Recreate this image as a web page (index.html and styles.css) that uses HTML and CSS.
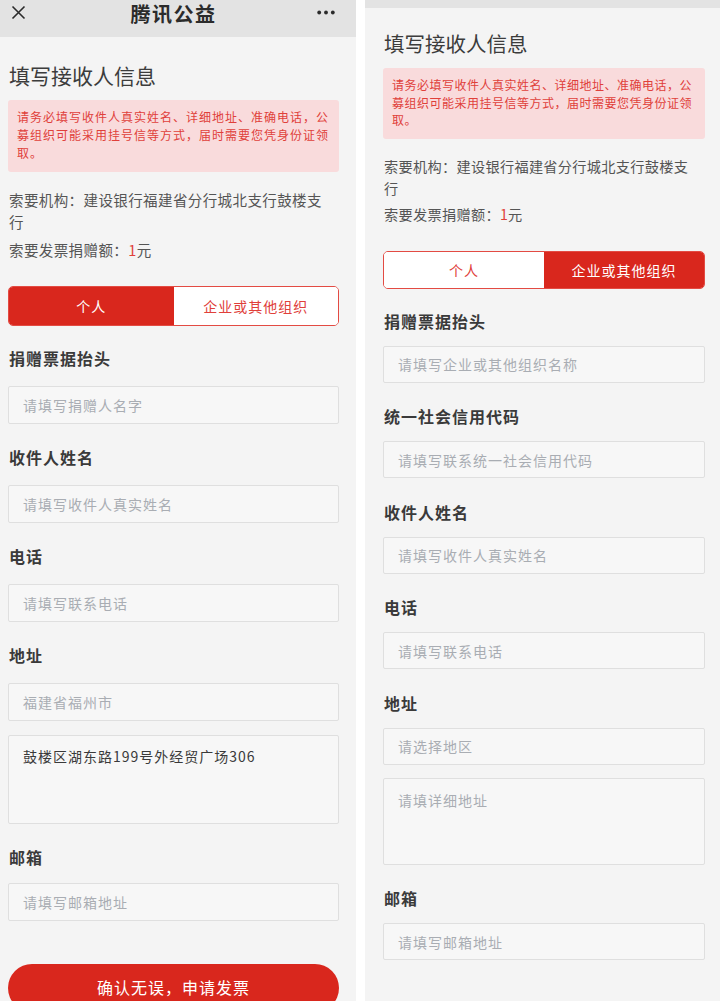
FILE: index.html
```html
<!DOCTYPE html>
<html lang="zh-CN">
<head>
  <meta charset="UTF-8" />
  <meta name="viewport" content="width=device-width, initial-scale=1.0"/>
  <title>填写接收人信息</title>
  <link rel="stylesheet" href="styles.css">
</head>
<body>

  <!-- 个人 -->
  <div class="phone phone-a">
    <div class="navbar">
      <svg class="nav-close" width="15" height="15" viewBox="0 0 15 15">
        <path d="M1.5 1.5 L13.5 13.5 M13.5 1.5 L1.5 13.5" stroke="#2b2b2b" stroke-width="1.6" fill="none"/>
      </svg>
      <div class="nav-title">腾讯公益</div>
      <svg class="nav-more" width="18" height="5" viewBox="0 0 18 5">
        <circle cx="2.2" cy="2.5" r="1.9" fill="#2b2b2b"/>
        <circle cx="9" cy="2.5" r="1.9" fill="#2b2b2b"/>
        <circle cx="15.8" cy="2.5" r="1.9" fill="#2b2b2b"/>
      </svg>
    </div>

    <div class="form">
      <h1 class="form-title">填写接收人信息</h1>
      <div class="notice">请务必填写收件人真实姓名、详细地址、准确电话，公募组织可能采用挂号信等方式，届时需要您凭身份证领取。</div>
      <p class="info">索要机构：建设银行福建省分行城北支行鼓楼支行</p>
      <p class="info">索要发票捐赠额：<em>1</em>元</p>

      <div class="tabs">
        <div class="tab active">个人</div>
        <div class="tab">企业或其他组织</div>
      </div>

      <div class="field">
        <label>捐赠票据抬头</label>
        <input type="text" placeholder="请填写捐赠人名字">
      </div>
      <div class="field">
        <label>收件人姓名</label>
        <input type="text" placeholder="请填写收件人真实姓名">
      </div>
      <div class="field">
        <label>电话</label>
        <input type="text" placeholder="请填写联系电话">
      </div>
      <div class="field">
        <label>地址</label>
        <input type="text" placeholder="福建省福州市">
        <textarea>鼓楼区湖东路199号外经贸广场306</textarea>
      </div>
      <div class="field">
        <label>邮箱</label>
        <input type="text" placeholder="请填写邮箱地址">
      </div>

      <button class="submit">确认无误，申请发票</button>
    </div>
  </div>

  <!-- 企业或其他组织 -->
  <div class="phone phone-b">
    <div class="strip"></div>

    <div class="form">
      <h1 class="form-title">填写接收人信息</h1>
      <div class="notice">请务必填写收件人真实姓名、详细地址、准确电话，公募组织可能采用挂号信等方式，届时需要您凭身份证领取。</div>
      <p class="info">索要机构：建设银行福建省分行城北支行鼓楼支行</p>
      <p class="info">索要发票捐赠额：<em>1</em>元</p>

      <div class="tabs">
        <div class="tab">个人</div>
        <div class="tab active">企业或其他组织</div>
      </div>

      <div class="field">
        <label>捐赠票据抬头</label>
        <input type="text" placeholder="请填写企业或其他组织名称">
      </div>
      <div class="field">
        <label>统一社会信用代码</label>
        <input type="text" placeholder="请填写联系统一社会信用代码">
      </div>
      <div class="field">
        <label>收件人姓名</label>
        <input type="text" placeholder="请填写收件人真实姓名">
      </div>
      <div class="field">
        <label>电话</label>
        <input type="text" placeholder="请填写联系电话">
      </div>
      <div class="field">
        <label>地址</label>
        <input type="text" placeholder="请选择地区">
        <textarea placeholder="请填详细地址"></textarea>
      </div>
      <div class="field">
        <label>邮箱</label>
        <input type="text" placeholder="请填写邮箱地址">
      </div>
    </div>
  </div>

</body>
</html>
```

FILE: styles.css
```css
* {
  box-sizing: border-box;
}

body {
  margin: 0;
  padding: 0;
  font-family: "Noto Sans CJK SC", "Noto Sans", sans-serif;
  background: #ffffff;
  display: flex;
  gap: 9px;
  height: 1001px;
  overflow: hidden;
}

.phone {
  background: #f4f4f4;
  height: 1001px;
  overflow: hidden;
}

.phone-a {
  width: 356px;
}

.phone-b {
  width: 355px;
}

/* top bar */
.navbar {
  height: 37px;
  background: #e3e3e3;
  display: flex;
  align-items: flex-start;
  justify-content: space-between;
  padding: 0 21px 0 11px;
}

.nav-close {
  margin-top: 5px;
}

.nav-title {
  margin-top: 2px;
  font-size: 20px;
  font-weight: bold;
  letter-spacing: 1.5px;
  line-height: 24px;
  color: #2b2b2b;
  margin-left: 4px;
}

.nav-more {
  margin-top: 10px;
}

.strip {
  height: 8px;
  background: #e3e3e3;
}

/* form */
.form {
  padding: 0 17px 0 8px;
}

.form-title {
  margin: 24px 0 0 1px;
  font-size: 21px;
  font-weight: normal;
  line-height: 28px;
  color: #3c3c3c;
}

.notice {
  margin-top: 11px;
  padding: 8px 6px 10px 9px;
  background: #f9dbdc;
  border-radius: 3px;
  color: #e0403a;
  font-size: 12px;
  letter-spacing: 1px;
  line-height: 18px;
}

.info {
  max-width: 320px;
  margin: 6px 0 0 1px;
  font-size: 14.5px;
  letter-spacing: 0.4px;
  line-height: 22px;
  color: #555555;
}

.notice + .info {
  margin-top: 17px;
}

.info em {
  font-style: normal;
  color: #e0403a;
}

.tabs {
  margin-top: 25px;
  height: 40px;
  display: grid;
  grid-template-columns: 1fr 1fr;
  border: 1px solid #e34b43;
  border-radius: 5px;
  overflow: hidden;
}

.tab {
  display: flex;
  align-items: center;
  justify-content: center;
  background: #ffffff;
  color: #e0403a;
  font-size: 14px;
  letter-spacing: 1px;
}

.tab.active {
  background: #d9271d;
  color: #ffffff;
}

.field {
  margin-top: 22px;
}

.tabs + .field {
  margin-top: 21px;
}

.field label {
  display: block;
  margin-left: 1px;
  font-size: 16px;
  font-weight: bold;
  letter-spacing: 1px;
  line-height: 22px;
  color: #3a3a3a;
}

.field input,
.field textarea {
  display: block;
  width: 100%;
  margin: 17px 0 0 0;
  height: 38px;
  padding: 0 14px;
  background: #f7f7f7;
  border: 1px solid #dfdfdf;
  border-radius: 2px;
  font-family: "Noto Sans CJK SC", "Noto Sans", sans-serif;
  font-size: 14px;
  letter-spacing: 1px;
  color: #3a3a3a;
  outline: none;
}

.field textarea {
  margin-top: 14px;
  height: 89px;
  padding: 10px 14px;
  line-height: 20px;
  resize: none;
}

.field input::placeholder,
.field textarea::placeholder {
  color: #a9adb3;
}

.field:last-of-type input {
  margin-top: 15px;
}

.submit {
  display: block;
  width: 100%;
  margin-top: 43px;
  height: 48px;
  padding: 0 0 2px 0;
  border: none;
  border-radius: 24px;
  background: #d9271d;
  color: #ffffff;
  font-family: "Noto Sans CJK SC", "Noto Sans", sans-serif;
  font-size: 16px;
  letter-spacing: 1px;
}

/* second screenshot, slightly smaller */
.phone-b .form {
  padding: 0 15px 0 18px;
}

.phone-b .form-title {
  margin-top: 21px;
  font-size: 20.5px;
}

.phone-b .notice {
  padding: 8px 6px 10px 9px;
  font-size: 12px;
  letter-spacing: 0.5px;
  line-height: 17.5px;
}

.phone-b .info {
  max-width: 312px;
  margin-top: 4px;
  font-size: 14.2px;
  letter-spacing: 0.3px;
}

.phone-b .notice + .info {
  margin-top: 16px;
}

.phone-b .tabs {
  margin-top: 26px;
  height: 38px;
}

.phone-b .field {
  margin-top: 22.5px;
}

.phone-b .tabs + .field {
  margin-top: 21px;
}

.phone-b .field input {
  margin-top: 14px;
  height: 37px;
}

.phone-b .field textarea {
  margin-top: 13px;
  height: 87px;
  padding-top: 11px;
}
```
